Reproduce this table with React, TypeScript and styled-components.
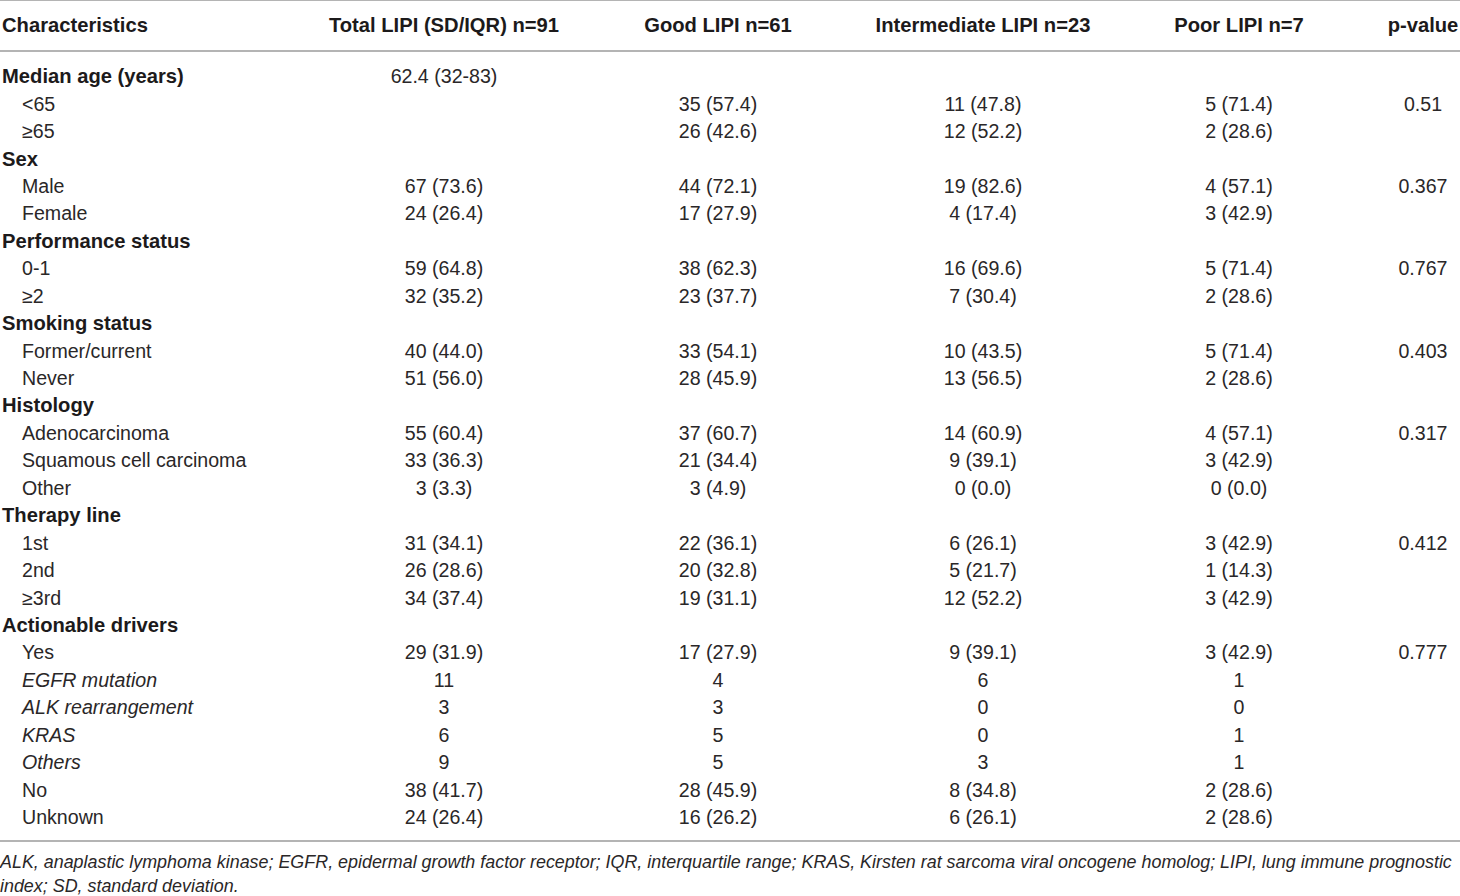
import React from "react";
import styled, { createGlobalStyle } from "styled-components";

const Global = createGlobalStyle`
  html, body { margin: 0; padding: 0; background: #fff; }
  body { font-family: "Liberation Sans", Arial, Helvetica, sans-serif; color: #231f20; }
`;

const Page = styled.div`
  width: 1460px;
`;

const Grid = styled.div`
  display: grid;
  grid-template-columns: 310px 268px 280px 250px 278px 74px;
`;

const HeaderRow = styled(Grid)`
  height: 49px;
  align-items: center;
  border-top: 1px solid #b4b4b4;
  border-bottom: 2px solid #b4b4b4;
  font-weight: 700;
  font-size: 20.2px;
  color: #1c1a1b;
`;

const Body = styled.div`
  padding: 11px 0 9px;
  border-bottom: 2px solid #b4b4b4;
`;

const Row = styled(Grid)`
  height: 27.44px;
  align-items: center;
  font-size: 19.6px;
`;

const Cell = styled.div<{ $padRight?: number }>`
  text-align: center;
  white-space: nowrap;
  padding-right: ${(p) => p.$padRight ?? 0}px;
`;

const HeadLabel = styled.div`
  padding-left: 2px;
  white-space: nowrap;
`;

const Label = styled.div<{ $kind: "group" | "sub" | "italic" }>`
  white-space: nowrap;
  padding-left: ${(p) => (p.$kind === "group" ? 2 : 22)}px;
  font-weight: ${(p) => (p.$kind === "group" ? 700 : 400)};
  font-size: ${(p) => (p.$kind === "group" ? "20.2px" : "inherit")};
  font-style: ${(p) => (p.$kind === "italic" ? "italic" : "normal")};
  color: ${(p) => (p.$kind === "group" ? "#1c1a1b" : "#2a2728")};
`;

const Value = styled(Cell)`
  color: #2a2728;
`;

const Footnote = styled.p`
  margin: 0;
  padding-top: 8px;
  font-style: italic;
  font-size: 17.9px;
  line-height: 24px;
  color: #2a2728;
`;

type R = {
  label: string;
  kind: "group" | "sub" | "italic";
  v?: [string, string, string, string, string];
};

const rows: R[] = [
  { label: "Median age (years)", kind: "group", v: ["62.4 (32-83)", "", "", "", ""] },
  { label: "<65", kind: "sub", v: ["", "35 (57.4)", "11 (47.8)", "5 (71.4)", "0.51"] },
  { label: "≥65", kind: "sub", v: ["", "26 (42.6)", "12 (52.2)", "2 (28.6)", ""] },
  { label: "Sex", kind: "group" },
  { label: "Male", kind: "sub", v: ["67 (73.6)", "44 (72.1)", "19 (82.6)", "4 (57.1)", "0.367"] },
  { label: "Female", kind: "sub", v: ["24 (26.4)", "17 (27.9)", "4 (17.4)", "3 (42.9)", ""] },
  { label: "Performance status", kind: "group" },
  { label: "0-1", kind: "sub", v: ["59 (64.8)", "38 (62.3)", "16 (69.6)", "5 (71.4)", "0.767"] },
  { label: "≥2", kind: "sub", v: ["32 (35.2)", "23 (37.7)", "7 (30.4)", "2 (28.6)", ""] },
  { label: "Smoking status", kind: "group" },
  { label: "Former/current", kind: "sub", v: ["40 (44.0)", "33 (54.1)", "10 (43.5)", "5 (71.4)", "0.403"] },
  { label: "Never", kind: "sub", v: ["51 (56.0)", "28 (45.9)", "13 (56.5)", "2 (28.6)", ""] },
  { label: "Histology", kind: "group" },
  { label: "Adenocarcinoma", kind: "sub", v: ["55 (60.4)", "37 (60.7)", "14 (60.9)", "4 (57.1)", "0.317"] },
  { label: "Squamous cell carcinoma", kind: "sub", v: ["33 (36.3)", "21 (34.4)", "9 (39.1)", "3 (42.9)", ""] },
  { label: "Other", kind: "sub", v: ["3 (3.3)", "3 (4.9)", "0 (0.0)", "0 (0.0)", ""] },
  { label: "Therapy line", kind: "group" },
  { label: "1st", kind: "sub", v: ["31 (34.1)", "22 (36.1)", "6 (26.1)", "3 (42.9)", "0.412"] },
  { label: "2nd", kind: "sub", v: ["26 (28.6)", "20 (32.8)", "5 (21.7)", "1 (14.3)", ""] },
  { label: "≥3rd", kind: "sub", v: ["34 (37.4)", "19 (31.1)", "12 (52.2)", "3 (42.9)", ""] },
  { label: "Actionable drivers", kind: "group" },
  { label: "Yes", kind: "sub", v: ["29 (31.9)", "17 (27.9)", "9 (39.1)", "3 (42.9)", "0.777"] },
  { label: "EGFR mutation", kind: "italic", v: ["11", "4", "6", "1", ""] },
  { label: "ALK rearrangement", kind: "italic", v: ["3", "3", "0", "0", ""] },
  { label: "KRAS", kind: "italic", v: ["6", "5", "0", "1", ""] },
  { label: "Others", kind: "italic", v: ["9", "5", "3", "1", ""] },
  { label: "No", kind: "sub", v: ["38 (41.7)", "28 (45.9)", "8 (34.8)", "2 (28.6)", ""] },
  { label: "Unknown", kind: "sub", v: ["24 (26.4)", "16 (26.2)", "6 (26.1)", "2 (28.6)", ""] },
];

const headers = [
  "Total LIPI (SD/IQR) n=91",
  "Good LIPI n=61",
  "Intermediate LIPI n=23",
  "Poor LIPI n=7",
  "p-value",
];

export default function App() {
  return (
    <Page>
      <Global />
      <HeaderRow>
        <HeadLabel>Characteristics</HeadLabel>
        {headers.map((h, i) => (
          <Cell key={h} $padRight={i === 3 ? 16 : 0}>
            {h}
          </Cell>
        ))}
      </HeaderRow>
      <Body>
        {rows.map((r, idx) => (
          <Row key={idx}>
            <Label $kind={r.kind}>{r.label}</Label>
            {(r.v ?? ["", "", "", "", ""]).map((v, i) => (
              <Value key={i} $padRight={i === 3 ? 16 : 0}>
                {v}
              </Value>
            ))}
          </Row>
        ))}
      </Body>
      <Footnote>
        ALK, anaplastic lymphoma kinase; EGFR, epidermal growth factor receptor; IQR, interquartile range; KRAS,
        Kirsten rat sarcoma viral oncogene homolog; LIPI, lung immune prognostic index; SD, standard deviation.
      </Footnote>
    </Page>
  );
}
